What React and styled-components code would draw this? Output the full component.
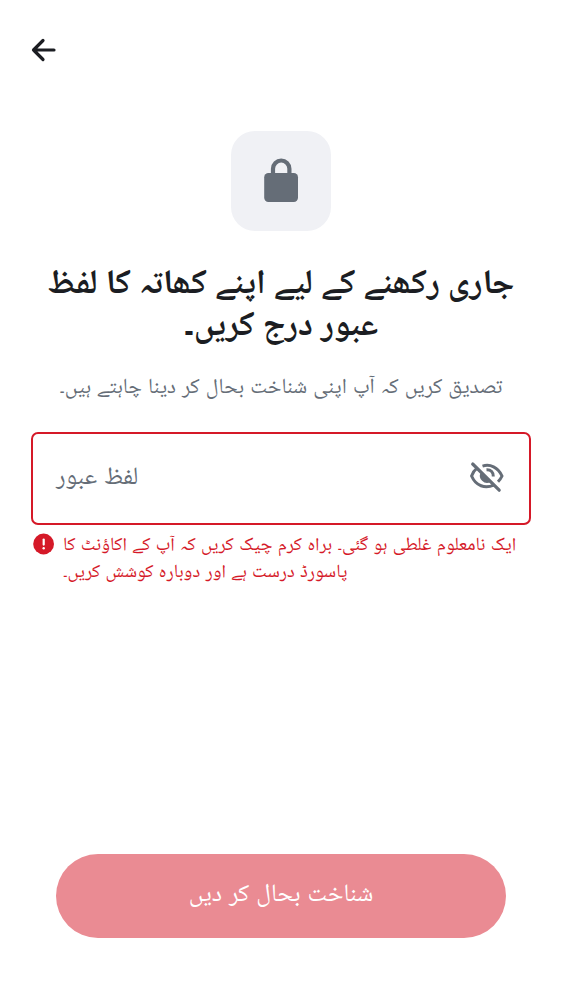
import React from "react";
import styled, { createGlobalStyle } from "styled-components";

const GlobalStyle = createGlobalStyle`
  * { box-sizing: border-box; }
  body { margin: 0; background: #fff; }
`;

const Screen = styled.main`
  width: 562px;
  height: 1000px;
  display: flex;
  flex-direction: column;
  background: #fff;
  color: #1b1d22;
  font-family: Inter, "Noto Naskh Arabic UI", "Noto Naskh Arabic", "Noto Sans Arabic UI", "Noto Sans Arabic", "Noto Sans", sans-serif;
`;

const TopBar = styled.header`
  height: 100px;
  padding: 31px 25px;
  display: flex;
  align-items: flex-start;
`;

const IconButton = styled.button`
  display: flex;
  padding: 0;
  border: 0;
  background: none;
  color: ${(p) => p.$color || "#1b1d22"};
`;

const Content = styled.section`
  flex: 1;
  display: flex;
  flex-direction: column;
  align-items: center;
  padding: 31px 31px 0;
`;

const Badge = styled.div`
  width: 100px;
  height: 100px;
  border-radius: 24px;
  display: flex;
  align-items: center;
  justify-content: center;
  background: #f0f1f5;
  color: #656d77;
`;

const Title = styled.h1`
  margin: 34px 0 0;
  font-size: 34.15px;
  line-height: 42px;
  font-weight: 700;
  text-align: center;
  white-space: nowrap;
`;

const Subtitle = styled.p`
  margin: 24px 0 0;
  font-size: 21.5px;
  line-height: 31px;
  color: #656d77;
  white-space: nowrap;
`;

const Field = styled.div`
  width: 500px;
  height: 93px;
  margin-top: 28px;
  padding: 0 23px 4px 23px;
  display: flex;
  align-items: center;
  justify-content: space-between;
  border: 2px solid #d51928;
  border-radius: 7px;
  color: #656d77;
`;

const Placeholder = styled.span`
  padding-top: 2px;
  font-size: 24.9px;
  line-height: 38px;
`;

const ErrorRow = styled.div`
  width: 500px;
  margin-top: 7px;
  padding-left: 1px;
  display: flex;
  gap: 7px;
  color: #d51928;
`;

const ErrorText = styled.p`
  margin: 0;
  padding-top: 2px;
  width: 456px;
  font-size: 18.75px;
  line-height: 26.5px;
  text-align: left;
  white-space: nowrap;
`;

const Footer = styled.footer`
  padding: 0 56px 62.5px;
`;

const SubmitButton = styled.button`
  width: 450px;
  height: 83.5px;
  display: flex;
  align-items: center;
  justify-content: center;
  padding: 0 0 2px;
  border: 0;
  border-radius: 42px;
  background: #ea8b93;
  color: #fff;
  font-family: inherit;
  font-size: 24.8px;
  line-height: 38px;
`;

const ArrowIcon = () => (
  <svg width="38" height="38" viewBox="0 0 38 38" fill="none" stroke="currentColor" strokeWidth="3.2" strokeLinecap="round" strokeLinejoin="round">
    <path d="M29 19H8.5M18 9.5 8.5 19l9.5 9.5" />
  </svg>
);

const LockIcon = () => (
  <svg width="50" height="50" viewBox="0 0 50 50" fill="currentColor">
    <rect x="8.2" y="17" width="33.8" height="29" rx="4.2" />
    <path d="M17 18v-5.3a8.2 8.2 0 0 1 16.4 0V18" fill="none" stroke="currentColor" strokeWidth="4.2" />
  </svg>
);

const EyeOffIcon = () => (
  <svg width="38" height="38" viewBox="0 0 38 38" fill="none" stroke="currentColor" strokeWidth="3">
    <path d="M14.5 8.1C22 5.8 30 9 34 18c-1 2.3-2.4 4.2-4 5.8" />
    <path d="M9 10.1C6.5 12 4.8 14.7 3.6 18c4.2 10 13.5 13 22.2 9.1" />
    <path d="M18.5 11.8c4.5-.2 7 2.7 6.8 6.7" />
    <path d="M12.9 14.2a7.2 7.2 0 0 0 9.8 9.8z" fill="currentColor" stroke="none" />
    <path d="M4.7 6 31.2 32.2" strokeWidth="3.2" strokeLinecap="round" />
  </svg>
);

const AlertIcon = () => (
  <svg width="24" height="24" viewBox="0 0 24 24" fill="currentColor">
    <circle cx="11.6" cy="12" r="10.4" />
    <path d="M11.7 7.6v5" stroke="#fff" strokeWidth="2.2" strokeLinecap="round" />
    <circle cx="11.7" cy="16.3" r="1.2" fill="#fff" />
  </svg>
);

export default function App() {
  return (
    <Screen lang="ur">
      <GlobalStyle />
      <TopBar>
        <IconButton aria-label="واپس"><ArrowIcon /></IconButton>
      </TopBar>
      <Content>
        <Badge><LockIcon /></Badge>
        <Title dir="rtl">جاری رکھنے کے لیے اپنے کھاتہ کا لفظ<br />عبور درج کریں۔</Title>
        <Subtitle dir="rtl">تصدیق کریں کہ آپ اپنی شناخت بحال کر دینا چاہتے ہیں۔</Subtitle>
        <Field>
          <Placeholder dir="rtl">لفظ عبور</Placeholder>
          <IconButton $color="#656d77" aria-label="لفظ عبور دکھائیں"><EyeOffIcon /></IconButton>
        </Field>
        <ErrorRow>
          <AlertIcon />
          <ErrorText dir="rtl">ایک نامعلوم غلطی ہو گئی۔ براہ کرم چیک کریں کہ آپ کے اکاؤنٹ کا<br />پاسورڈ درست ہے اور دوبارہ کوشش کریں۔</ErrorText>
        </ErrorRow>
      </Content>
      <Footer>
        <SubmitButton dir="rtl">شناخت بحال کر دیں</SubmitButton>
      </Footer>
    </Screen>
  );
}
